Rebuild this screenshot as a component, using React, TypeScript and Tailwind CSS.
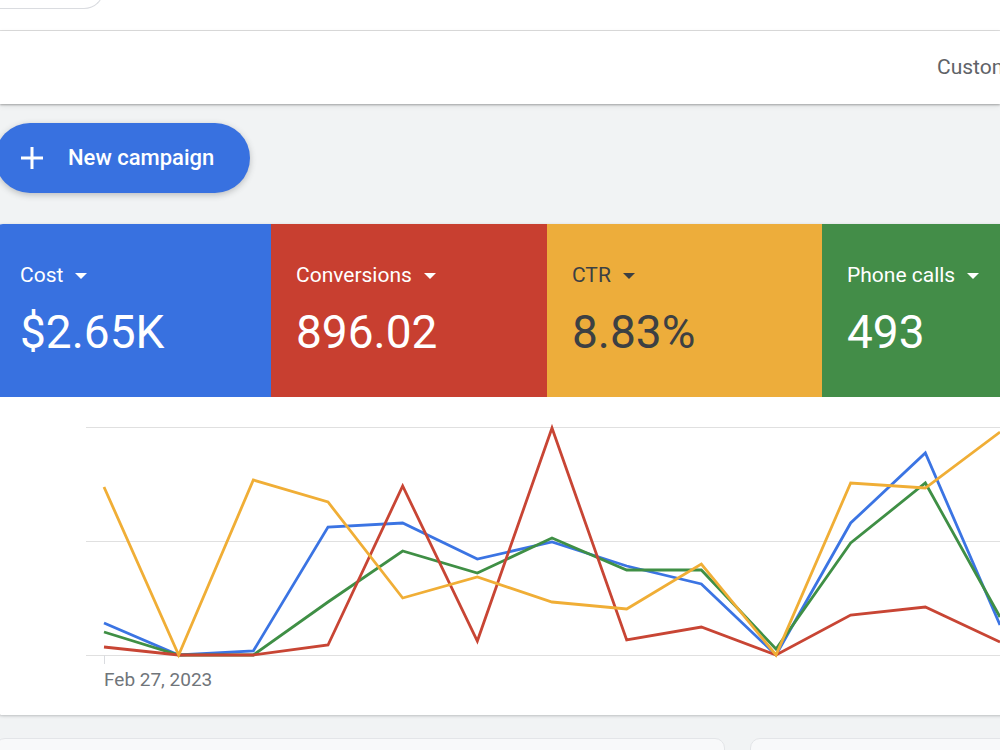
const xs = Array.from({ length: 13 }, (_, i) => 104 + i * 74.667);

const series = [
  { color: "#3b74e3", ys: [623, 655, 651, 527, 523, 559, 542, 566, 584, 655, 523, 453, 625] },
  { color: "#3f8f45", ys: [632, 655, 655, 602, 551, 573, 538, 570, 570, 649, 543, 483, 617] },
  { color: "#c84534", ys: [647, 655, 655, 645, 486, 641, 428, 640, 627, 655, 615, 607, 642] },
  { color: "#f0ae36", ys: [487, 655, 480, 502, 598, 577, 602, 609, 564, 655, 483, 488, 432] },
];

const metrics = [
  { label: "Cost", value: "$2.65K", bg: "bg-[#3871e0]", text: "text-white", w: "w-[276px]" },
  { label: "Conversions", value: "896.02", bg: "bg-[#c83f30]", text: "text-white", w: "w-[276px]" },
  { label: "CTR", value: "8.83%", bg: "bg-[#edad3b]", text: "text-[#3c4043]", w: "w-[275px]" },
  { label: "Phone calls", value: "493", bg: "bg-[#438d48]", text: "text-white", w: "w-[275px]" },
];

const Caret = () => (
  <svg width="12" height="6" viewBox="0 0 12 6" className="ml-[12px] fill-current">
    <path d="M0 0h12L6 6z" />
  </svg>
);

const Chart = () => {
  // chart top sits at y=397 on the page, card starts at x=-5
  return (
    <svg width="1105" height="268" className="block">
      <g transform="translate(5,-397)">
        {[427, 541, 655].map((y) => (
          <line key={y} x1="86" x2="1100" y1={y + 0.5} y2={y + 0.5} stroke="#e0e0e0" strokeWidth="1" />
        ))}
        <line x1="104.5" x2="104.5" y1="655" y2="664" stroke="#dadce0" strokeWidth="1" />
        {series.map((s) => (
          <polyline
            key={s.color}
            points={s.ys.map((y, i) => `${xs[i]},${y}`).join(" ")}
            fill="none"
            stroke={s.color}
            strokeWidth="2.8"
            strokeLinejoin="miter"
          />
        ))}
      </g>
    </svg>
  );
};

const App = () => {
  return (
    <div className="w-[1000px] h-[750px] overflow-hidden bg-[#f1f3f4] font-['Roboto',sans-serif]">
      {/* top strip */}
      <div className="h-[31px] bg-white border-b border-[#e0e0e0] overflow-hidden">
        <div className="-mt-[22px] h-[31px] w-[104px] border-r border-b border-[#dadce0] rounded-br-[20px]" />
      </div>
      <div className="h-[73px] bg-white flex items-center shadow-[0_1px_2px_rgba(0,0,0,0.3),0_2px_6px_rgba(0,0,0,0.08)] relative">
        <span className="pl-[937px] whitespace-nowrap text-[21px] leading-none text-[#5f6368]">Customize</span>
      </div>

      <div className="-ml-[5px] w-[1110px] pt-[19px]">
        <button className="h-[70px] w-[255px] rounded-full bg-[#3871e0] flex items-center pl-[25px] text-white shadow-[0_2px_6px_rgba(60,64,67,0.3)]">
          <svg width="24" height="24" viewBox="0 0 24 24" className="shrink-0">
            <path d="M12 1v22M1 12h22" stroke="white" strokeWidth="3" />
          </svg>
          <span className="ml-[24px] text-[22px] leading-none font-medium">New campaign</span>
        </button>

        <div className="mt-[31px] rounded-lg bg-white shadow-[0_1px_3px_rgba(60,64,67,0.3)] overflow-hidden">
          <div className="flex h-[173px]">
            {metrics.map((m) => (
              <div key={m.label} className={`${m.w} ${m.bg} ${m.text} pl-[25px] pt-[41px] shrink-0`}>
                <div className="flex items-center text-[21px] leading-none">
                  {m.label}
                  <Caret />
                </div>
                <div className="mt-[23px] text-[46px] leading-none">{m.value}</div>
              </div>
            ))}
          </div>
          <Chart />
          <div className="pl-[109px] pt-[5px] pb-[26px] text-[19px] leading-none text-[#70757a]">Feb 27, 2023</div>
        </div>

        <div className="mt-[23px] flex gap-[25px]">
          <div className="w-[730px] h-[40px] rounded-[10px] bg-[#f8f9fa] border border-[#e3e5e8]" />
          <div className="flex-1 h-[40px] rounded-[10px] bg-[#f8f9fa] border border-[#e3e5e8]" />
        </div>
      </div>
    </div>
  );
};

export default App;
